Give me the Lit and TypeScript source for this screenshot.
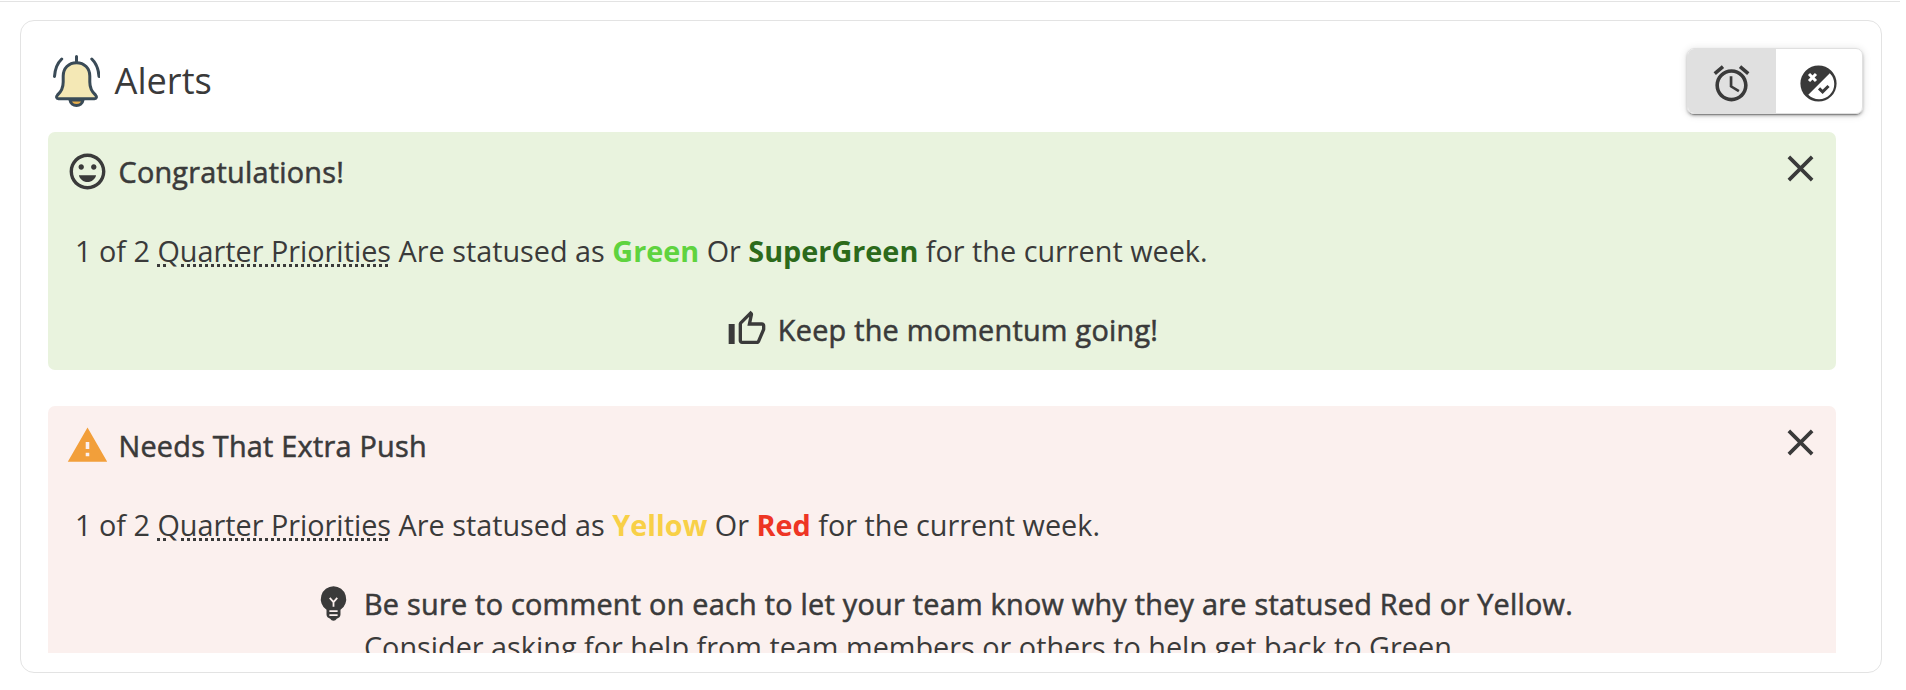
import { LitElement, html, css, svg } from "lit";
import { customElement, property } from "lit/decorators.js";

const icons: Record<string, unknown> = {
  mood: svg`<path d="M11.99 2C6.47 2 2 6.48 2 12s4.47 10 9.99 10C17.52 22 22 17.52 22 12S17.52 2 11.99 2zM12 20.1c-4.470 0-8.100-3.630-8.100-8.100S7.530 3.900 12 3.900s8.100 3.630 8.100 8.100-3.630 8.100-8.100 8.100zm3.5-9.100c.83 0 1.5-.67 1.5-1.5S16.33 8 15.5 8 14 8.67 14 9.5s.67 1.5 1.5 1.5zm-7 0c.83 0 1.5-.67 1.5-1.5S9.33 8 8.500 8 7 8.670 7 9.500 7.670 11 8.500 11zm3.5 6.900c2.330 0 4.310-1.660 4.800-3.800H7.200c.49 2.140 2.470 3.800 4.800 3.800z"/>`,
  thumb: svg`<path d="M9 21h9c.83 0 1.54-.5 1.84-1.220l3.020-7.050c.09-.23.14-.47.14-.73v-2c0-1.100-.9-2-2-2h-6.310l.95-4.570.03-.32c0-.41-.17-.79-.44-1.060L14.170 1 7.580 7.590C7.220 7.950 7 8.450 7 9v10c0 1.100.9 2 2 2zM9 9l4.340-4.340L12.230 10H21v2l-3 7H9V9zM1 9h3.600v12H1z"/>`,
  warning: svg`<path d="M1 21h22L12 2 1 21zm12-3h-2v-2h2v2zm0-4h-2v-4h2v4z"/>`,
  alarm: svg`<path d="M22 5.720l-4.600-3.860-1.290 1.530 4.600 3.860L22 5.720zM7.880 3.390L6.600 1.860 2 5.710l1.290 1.530 4.590-3.850zM12.500 8H11v6l4.750 2.850.75-1.230-4-2.370V8zM12 4c-4.970 0-9 4.030-9 9s4.020 9 9 9c4.970 0 9-4.030 9-9s-4.030-9-9-9zm0 16c-3.870 0-7-3.130-7-7s3.130-7 7-7 7 3.130 7 7-3.130 7-7 7z"/>`,
  status: svg`<path fill-rule="evenodd" d="M12 1.900a10.100 10.100 0 1 0 0 20.200a10.100 10.100 0 0 0 0-20.200zM18.300 6.300L6.300 18.300A8.300 8.300 0 0 0 18.300 6.300z"/><path d="M6.700 6.700l3.900 3.900M10.600 6.700l-3.900 3.900" fill="none" stroke="#fff" stroke-width="1.700"/><path d="M12.300 14.700l2 2 3.300-3.300" fill="none" stroke="currentColor" stroke-width="1.700"/>`,
  bulb: svg`<path d="M12 2.400a7.150 7.150 0 0 0-3.900 13.100V18.200c0 1.200.9 2 2.100 2.300.4.600 1 1.100 1.800 1.100s1.400-.5 1.800-1.100c1.200-.3 2.100-1.100 2.100-2.300V15.500A7.150 7.150 0 0 0 12 2.400z"/><path d="M9.900 8.900l2.100 2.300 2.100-2.300M12 11.200v2.600M9.700 16.300h4.600M9.700 18.500h4.600" fill="none" stroke="#fbf0ee" stroke-width="1"/>`,
  close: svg`<path d="M5.500 5.500l13 13M18.500 5.500l-13 13" fill="none" stroke="currentColor" stroke-width="2.050"/>`,
};

@customElement("ui-icon")
class UiIcon extends LitElement {
  @property() name = "";
  static styles = css`
    :host { display: block; flex: none; width: 43px; height: 43px; }
    svg { display: block; width: 100%; height: 100%; fill: currentColor; }
  `;
  render() {
    return html`<svg viewBox="0 0 24 24">${icons[this.name]}</svg>`;
  }
}

@customElement("alert-box")
class AlertBox extends LitElement {
  @property() icon = "";
  @property() heading = "";
  @property() tone = "";
  static styles = css`
    :host { display: block; flex: none; }
    .box { border-radius: 7px; height: 238px; padding: 0 14px 0 18px; box-sizing: border-box; }
    .good { background: #e9f3de; }
    .bad { background: #fbf0ee; height: 290px; }
    .head { display: flex; align-items: center; height: 79px; gap: 9.5px; }
    .head ui-icon { margin-bottom: 1px; }
    .bad .lead { color: #f29f3a; }
    .title { flex: 1; letter-spacing: .25px; -webkit-text-stroke: .55px currentColor; }
    .head .close { margin-bottom: 7px; }
    .body { padding: 0 9px; line-height: 79px; white-space: nowrap; }
  `;
  render() {
    return html`<div class="box ${this.tone}">
      <div class="head">
        <ui-icon class="lead" name=${this.icon}></ui-icon>
        <span class="title">${this.heading}</span>
        <ui-icon class="close" name="close"></ui-icon>
      </div>
      <div class="body"><slot></slot></div>
      <slot name="tip"></slot>
    </div>`;
  }
}

@customElement("app-root")
class AppRoot extends LitElement {
  static styles = css`
    :host { display: block; height: 690px; box-sizing: border-box; overflow: hidden; background: #fff; color: #3a3a3a;
      font: 400 28.8px/43px "Open Sans", "Noto Sans", sans-serif; padding: 1px 0 0; }
    .rule { height: 1px; background: #e3e3e3; width: 1900px; }
    .card { margin: 18px 0 0 20px; width: 1862px; height: 653px; box-sizing: border-box; border: 1px solid #e3e3e3; border-radius: 14px;
      padding: 0 18px 0 27px; display: flex; flex-direction: column; }
    .header { height: 111px; flex: none; display: flex; align-items: flex-start; }
    .bell { width: 52px; height: 56px; margin: 32px 0 0; display: block; }
    .name { font-size: 36.2px; line-height: 50px; margin: 34px 0 0 14.5px; flex: 1; }
    .toggle { display: flex; margin-top: 27px; width: 176px; height: 66px; box-sizing: border-box; border: 1px solid #e0e0e0; border-radius: 7px; overflow: hidden;
      box-shadow: 0 3px 1px -2px rgba(0,0,0,.3), 0 2px 3px rgba(0,0,0,.25), 0 1px 8px rgba(0,0,0,.12); }
    .seg { flex: 1; display: flex; align-items: center; justify-content: center; padding-top: 4px; }
    .on { background: #e0e0e0; padding-right: 1px; }
    .list { flex: none; width: 1788px; height: 521px; overflow: hidden; display: flex; flex-direction: column; gap: 36px; }
    .term { text-decoration: underline dotted; text-decoration-thickness: 3px; text-underline-offset: 2px; }
    .g { color: #5fd33f; font-weight: 700; }
    .sg { color: #2c6a1b; font-weight: 700; }
    .y { color: #f8d047; font-weight: 700; }
    .r { color: #ee3524; font-weight: 700; }
    .tip { display: flex; justify-content: center; align-items: flex-start; padding-top: 18px; white-space: nowrap; }
    .m { letter-spacing: .25px; -webkit-text-stroke: .55px currentColor; }
    .keep { padding-right: 3px; }
    .thumb { width: 40px; height: 40px; margin: 1px 11px 0 0; }
    .advice { margin-left: 9px; }
    .wide .m { letter-spacing: .26px; }
    .wide { padding-right: 3px; }
  `;
  render() {
    return html`
      <div class="rule"></div>
      <section class="card">
        <div class="header">
          <svg class="bell" viewBox="0 0 52 56" fill="none" stroke="#3a4b57" stroke-width="3" stroke-linecap="round" stroke-linejoin="round">
            <path d="M22 47c.5 3.500 3.300 5.500 6.500 5.500s6-2 6.500-5.500z" fill="#e5ad4b"/>
            <path d="M28.500 9.700c-8 0-13.300 5.800-13.300 13.300v6c0 6-1.700 9.500-5.700 13-1.600 1.700-1.200 3.700 1 3.700h36c2.200 0 2.600-2 1-3.700-4-3.500-5.700-7-5.700-13v-6c0-7.500-5.300-13.300-13.300-13.300z" fill="#f4e8b5"/>
            <path d="M28.500 3.500v5M13.700 6C9.500 10 7 15.500 6.500 23.500M43.800 6c4.200 4 6.700 9.500 7.200 17.500" />
          </svg>
          <span class="name">Alerts</span>
          <div class="toggle">
            <div class="seg on"><ui-icon name="alarm"></ui-icon></div>
            <div class="seg"><ui-icon name="status"></ui-icon></div>
          </div>
        </div>
        <div class="list">
          <alert-box tone="good" icon="mood" heading="Congratulations!">
            1 of 2 <span class="term">Quarter Priorities</span> Are statused as <span class="g">Green</span> Or <span class="sg">SuperGreen</span> for the current week.
            <div slot="tip" class="tip m keep"><ui-icon class="thumb" name="thumb"></ui-icon><span>Keep the momentum going!</span></div>
          </alert-box>
          <alert-box tone="bad" icon="warning" heading="Needs That Extra Push">
            1 of 2 <span class="term">Quarter Priorities</span> Are statused as <span class="y">Yellow</span> Or <span class="r">Red</span> for the current week.
            <div slot="tip" class="tip wide"><ui-icon name="bulb"></ui-icon>
              <div class="advice"><div class="m">Be sure to comment on each to let your team know why they are statused Red or Yellow.</div>
              <div>Consider asking for help from team members or others to help get back to Green.</div></div></div>
          </alert-box>
        </div>
      </section>`;
  }
}
